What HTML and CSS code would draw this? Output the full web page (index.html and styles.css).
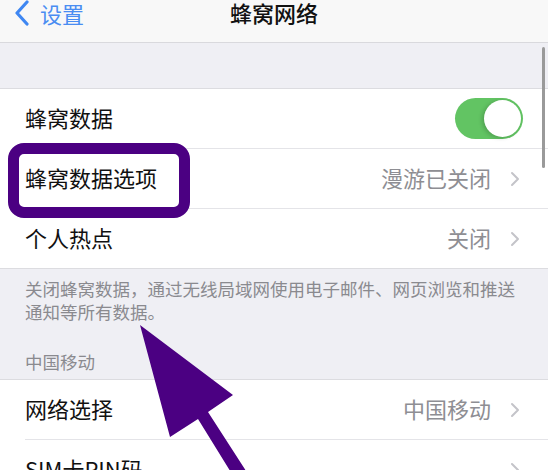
FILE: index.html
```html
<!DOCTYPE html>
<html lang="zh-CN">
<head>
  <meta charset="UTF-8">
  <meta name="viewport" content="width=device-width, initial-scale=1.0">
  <title>蜂窝网络</title>
  <link rel="stylesheet" href="styles.css">
</head>
<body>

  <div class="screen">
    <div class="navbar">
      <a class="back">
        <svg class="back-icon" width="16" height="26" viewBox="0 0 16 26">
          <path d="M13 2 L3 13 L13 24" fill="none" stroke="#3f87f2" stroke-width="3.2" stroke-linecap="round" stroke-linejoin="round"/>
        </svg>
        <span>设置</span>
      </a>
      <div class="title">蜂窝网络</div>
    </div>

    <div class="spacer"></div>

    <div class="group">
      <div class="row">
        <div class="row-inner">
          <span class="label">蜂窝数据</span>
          <span class="toggle on"><span class="knob"></span></span>
        </div>
      </div>
      <div class="row">
        <div class="row-inner">
          <span class="label">蜂窝数据选项</span>
          <span class="value">漫游已关闭</span>
          <svg class="chevron" width="10" height="16" viewBox="0 0 10 16"><path d="M2 2 L8 8 L2 14" fill="none" stroke="#c4c4c9" stroke-width="2" stroke-linecap="round" stroke-linejoin="round"/></svg>
        </div>
      </div>
      <div class="row">
        <div class="row-inner last">
          <span class="label">个人热点</span>
          <span class="value">关闭</span>
          <svg class="chevron" width="10" height="16" viewBox="0 0 10 16"><path d="M2 2 L8 8 L2 14" fill="none" stroke="#c4c4c9" stroke-width="2" stroke-linecap="round" stroke-linejoin="round"/></svg>
        </div>
      </div>
    </div>

    <div class="section-footer">
      <p class="note">关闭蜂窝数据，通过无线局域网使用电子邮件、网页浏览和推送通知等所有数据。</p>
      <p class="section-title">中国移动</p>
    </div>

    <div class="group">
      <div class="row">
        <div class="row-inner">
          <span class="label">网络选择</span>
          <span class="value">中国移动</span>
          <svg class="chevron" width="10" height="16" viewBox="0 0 10 16"><path d="M2 2 L8 8 L2 14" fill="none" stroke="#c4c4c9" stroke-width="2" stroke-linecap="round" stroke-linejoin="round"/></svg>
        </div>
      </div>
      <div class="row">
        <div class="row-inner last">
          <span class="label">SIM卡PIN码</span>
          <span class="value"></span>
          <svg class="chevron" width="10" height="16" viewBox="0 0 10 16"><path d="M2 2 L8 8 L2 14" fill="none" stroke="#c4c4c9" stroke-width="2" stroke-linecap="round" stroke-linejoin="round"/></svg>
        </div>
      </div>
    </div>

    <div class="scrollbar"></div>
    <div class="highlight"></div>
    <svg class="arrow" width="556" height="470" viewBox="0 0 556 470">
      <polygon points="140,325 233,395 208,412 248,474 232,474 198,419 170,437" fill="#4b0082"/>
    </svg>
  </div>

</body>
</html>
```

FILE: styles.css
```css
* {
  box-sizing: border-box;
  margin: 0;
  padding: 0;
}

body {
  font-family: "Noto Sans CJK SC", "Noto Sans", sans-serif;
  background: #fff;
  width: 556px;
  height: 470px;
  overflow: hidden;
}

.screen {
  position: relative;
  width: 548px;
  height: 470px;
  background: #efeff4;
  overflow: hidden;
}

.navbar {
  height: 43px;
  background: #f8f8f8;
  border-bottom: 1px solid #d9d9dd;
  display: flex;
  justify-content: center;
  position: relative;
}

.back {
  position: absolute;
  left: 14px;
  top: 0;
  display: flex;
  align-items: center;
  gap: 10px;
  color: #4a8df2;
  font-size: 22px;
  line-height: 26px;
}

.title {
  font-size: 22px;
  line-height: 25px;
  font-weight: 500;
  color: #111;
}

.spacer {
  height: 45px;
}

.group {
  background: #fff;
  border-top: 1px solid #dcdce0;
  border-bottom: 1px solid #dcdce0;
}

.row {
  padding-left: 25px;
}

.row-inner {
  height: 60px;
  display: flex;
  align-items: center;
  padding-right: 28px;
  border-bottom: 1px solid #e4e4e8;
}

.row-inner.last {
  border-bottom: none;
  height: 59px;
}

.label {
  font-size: 22px;
  color: #111;
  flex: 1;
  margin-top: -3px;
}

.value {
  font-size: 22px;
  color: #8e8e93;
  margin-right: 19px;
  margin-top: -3px;
}

.chevron {
  display: block;
}

.toggle {
  width: 68px;
  height: 41px;
  border-radius: 21px;
  background: #62c463;
  position: relative;
  margin-right: -3px;
}

.toggle .knob {
  position: absolute;
  right: 2px;
  top: 2px;
  width: 37px;
  height: 37px;
  border-radius: 50%;
  background: #fff;
  box-shadow: -2px 1px 4px rgba(0, 0, 0, 0.18);
}

.section-footer {
  padding: 8px 30px 6px 25px;
  color: #8a8a8f;
}

.note {
  font-size: 17.5px;
  line-height: 23px;
}

.section-title {
  font-size: 17.5px;
  line-height: 23px;
  margin-top: 27px;
}

.scrollbar {
  position: absolute;
  left: 542px;
  top: 47px;
  width: 3px;
  height: 121px;
  border-radius: 2px;
  background: #9a9a9a;
}

.highlight {
  position: absolute;
  left: 8px;
  top: 143px;
  width: 182px;
  height: 75px;
  border: 11px solid #4b0082;
  border-radius: 16px;
}

.arrow {
  position: absolute;
  left: 0;
  top: 0;
}
```
